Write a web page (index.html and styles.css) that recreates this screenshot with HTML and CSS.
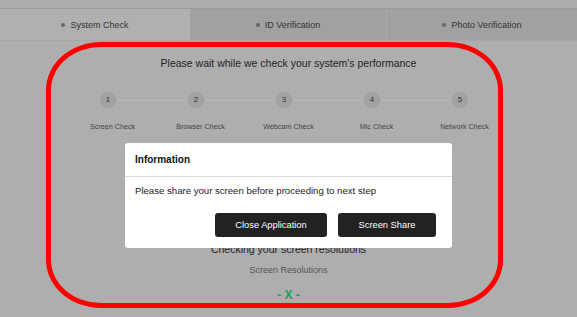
FILE: index.html
```html
<!DOCTYPE html>
<html lang="en">
<head>
<meta charset="utf-8">
<title>System Check</title>
<link rel="stylesheet" href="styles.css">
</head>
<body>
<div class="topbar"></div>
<nav class="tabs">
  <div class="tab tab-active"><span class="dot"></span>System Check</div>
  <div class="tab"><span class="dot"></span>ID Verification</div>
  <div class="tab tab-last"><span class="dot"></span>Photo Verification</div>
</nav>
<main class="main">
  <h1 class="heading">Please wait while we check your system's performance</h1>
  <ol class="steps">
    <li class="step"><span class="circle">1</span></li>
    <li class="step"><span class="circle">2</span></li>
    <li class="step"><span class="circle">3</span></li>
    <li class="step"><span class="circle">4</span></li>
    <li class="step step-last"><span class="circle">5</span></li>
  </ol>
  <ul class="labels">
    <li>Screen Check</li>
    <li>Browser Check</li>
    <li>Webcam Check</li>
    <li>Mic Check</li>
    <li>Network Check</li>
  </ul>
  <p class="checking">Checking your screen resolutions</p>
  <p class="sub">Screen Resolutions</p>
  <p class="result">- X -</p>
</main>
<div class="highlight"></div>
<div class="modal">
  <div class="modal-header">Information</div>
  <div class="modal-body">Please share your screen before proceeding to next step</div>
  <div class="modal-actions">
    <button class="btn btn-close">Close Application</button>
    <button class="btn btn-share">Screen Share</button>
  </div>
</div>
</body>
</html>
```
FILE: styles.css
```css
* { box-sizing: border-box; }
html, body { margin: 0; padding: 0; }
body {
  background: #aeaeae;
  font-family: "Liberation Sans", Arial, sans-serif;
  color: #222;
  width: 577px;
  height: 317px;
  overflow: hidden;
  position: relative;
}
.topbar {
  height: 9px;
  background: #adadad;
  border-bottom: 1px solid #9b9b9b;
}
.tabs {
  display: grid;
  grid-template-columns: 190px 196px 1fr;
  height: 32px;
  border-bottom: 1px solid #a6a6a6;
}
.tab {
  display: flex;
  align-items: center;
  justify-content: center;
  gap: 5px;
  font-size: 9px;
  color: #333;
  background: #a1a1a1;
}
.tab-active { background: #b0b0b0; }
.tab-last { border-left: 1px solid #a9a9a9; }
.dot {
  width: 4px;
  height: 4px;
  border-radius: 50%;
  background: #666;
}
.main {
  display: flex;
  flex-direction: column;
  align-items: center;
}
.heading {
  margin: 15px 0 0;
  font-size: 10.5px;
  line-height: 14px;
  font-weight: normal;
  color: #222;
}
.steps, .labels {
  list-style: none;
  margin: 0;
  padding: 0;
  width: 440px;
  display: grid;
  grid-template-columns: repeat(5, 88px);
}
.steps { margin: 22px 9px 0 0; }
.step {
  position: relative;
  display: flex;
  justify-content: center;
}
.step::after {
  content: "";
  position: absolute;
  left: 54px;
  width: 68px;
  top: 8px;
  border-top: 1px dotted #c4c4c4;
}
.step-last::after { display: none; }
.circle {
  width: 16px;
  height: 16px;
  border-radius: 50%;
  background: #a2a2a2;
  font-size: 8px;
  line-height: 16px;
  text-align: center;
  color: #333;
}
.labels {
  margin-top: 14px;
  font-size: 7.2px;
  line-height: 10px;
  color: #444;
  text-align: center;
}
.checking {
  margin: 110px 0 0;
  font-size: 10.5px;
  line-height: 14px;
  color: #222;
}
.sub {
  margin: 8px 0 0;
  font-size: 9px;
  line-height: 12px;
  color: #555;
}
.result {
  margin: 12px 0 0;
  font-size: 12px;
  line-height: 14px;
  font-weight: bold;
  color: #17a257;
}
.highlight {
  position: absolute;
  left: 46px;
  top: 42px;
  width: 457px;
  height: 266px;
  border: 5px solid #ff0000;
  border-radius: 55px / 48px;
}
.modal {
  position: absolute;
  left: 125px;
  top: 143px;
  width: 327px;
  height: 105px;
  background: #fff;
  border-radius: 3px;
  display: flex;
  flex-direction: column;
}
.modal-header {
  height: 34px;
  padding: 0 10px;
  display: flex;
  align-items: center;
  font-size: 10px;
  font-weight: bold;
  color: #111;
  border-bottom: 1px solid #dcdcdc;
}
.modal-body {
  padding: 8px 10px 0;
  font-size: 9.6px;
  line-height: 12px;
  color: #222;
}
.modal-actions {
  margin-top: 16px;
  padding: 0 16px 0 0;
  display: flex;
  justify-content: flex-end;
  gap: 11px;
}
.btn {
  height: 24px;
  border: none;
  border-radius: 3px;
  background: #222;
  color: #fff;
  font-family: "Liberation Sans", Arial, sans-serif;
  font-size: 9.3px;
  padding: 0;
}
.btn-close { width: 112px; }
.btn-share { width: 98px; }
```
